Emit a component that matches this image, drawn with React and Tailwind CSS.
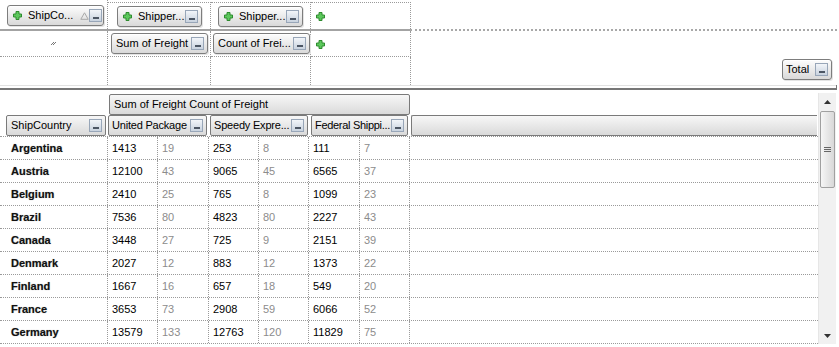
import React from "react";

const rows = [
  ["Argentina", 1413, 19, 253, 8, 111, 7],
  ["Austria", 12100, 43, 9065, 45, 6565, 37],
  ["Belgium", 2410, 25, 765, 8, 1099, 23],
  ["Brazil", 7536, 80, 4823, 80, 2227, 43],
  ["Canada", 3448, 27, 725, 9, 2151, 39],
  ["Denmark", 2027, 12, 883, 12, 1373, 22],
  ["Finland", 1667, 16, 657, 18, 549, 20],
  ["France", 3653, 73, 2908, 59, 6066, 52],
  ["Germany", 13579, 133, 12763, 120, 11829, 75],
];

const numWidths = ["w-[50px]", "w-[51px]", "w-[50px]", "w-[50px]", "w-[51px]", "w-[50px]"];

const Plus = () => (
  <svg width="9" height="9" viewBox="0 0 9 9" className="shrink-0">
    <path d="M3 .5h3V3h2.5v3H6v2.5H3V6H.5V3H3z" fill="#5cc85c" stroke="#2e8b2e" strokeWidth="1" />
  </svg>
);

const Hide = () => (
  <span className="shrink-0 w-[13px] h-[13px] border border-[#98a6b8] bg-gradient-to-b from-[#f2f5f9] to-[#c9d3df] flex items-end justify-center pb-[2px]">
    <span className="block w-[6px] h-[2px] bg-[#4c5664]" />
  </span>
);

const SortUp = () => (
  <svg width="9" height="8" viewBox="0 0 9 8" className="shrink-0">
    <path d="M4.5 .8 8.2 7.3H.8z" fill="none" stroke="#a8a8a8" strokeWidth="1" />
  </svg>
);

const Grip = () => (
  <svg width="7" height="5" viewBox="0 0 7 5">
    <path d="M1 4 4 1M3 4 6 1" stroke="#777" strokeWidth="1" />
  </svg>
);

// top bar field button
const Field = ({ children, className }) => (
  <div
    className={
      "flex items-center h-[21px] whitespace-nowrap border border-[#7d7d7d] rounded-[3px] bg-gradient-to-b from-[#fdfdfd] to-[#d9d9d9] shadow-[inset_0_1px_0_#fff,1px_1px_0_#e4e4e4] " +
      className
    }
  >
    {children}
  </div>
);

// grid column header
const Head = ({ children, className }) => (
  <div
    className={
      "flex items-center h-[21px] whitespace-nowrap border border-[#7a7a7a] rounded-[2px] bg-gradient-to-b from-[#f7f7f7] to-[#dadada] " +
      className
    }
  >
    {children}
  </div>
);

const dot = "border-dotted border-[#9a9a9a]";

export default function App() {
  return (
    <div className="w-[839px] h-[347px] bg-white overflow-hidden font-['Liberation_Sans',Arial,sans-serif] text-[11px] text-black leading-none">
      {/* PIVOT FIELDS AREA */}
      <div className="flex h-[29px]">
        <div className={`w-[108px] border-r ${dot} pt-[5px] pl-[7px]`}>
          <Field className="w-[97px] pl-[5px] pr-[3px]">
            <Plus />
            <span className="ml-[6px]">ShipCo...</span>
            <span className="ml-[7px]"><SortUp /></span>
            <span className="ml-auto"><Hide /></span>
          </Field>
        </div>
        <div className="flex mt-[2px]">
          <div className={`w-[103px] border-r border-t ${dot} pt-[3px] pl-[9px]`}>
            <Field className="w-[85px] pl-[5px] pr-[3px]">
              <Plus />
              <span className="ml-[6px]">Shipper...</span>
              <span className="ml-auto"><Hide /></span>
            </Field>
          </div>
          <div className={`w-[100px] border-r border-t ${dot} pt-[3px] pl-[7px]`}>
            <Field className="w-[85px] pl-[5px] pr-[3px]">
              <Plus />
              <span className="ml-[6px]">Shipper...</span>
              <span className="ml-auto"><Hide /></span>
            </Field>
          </div>
          <div className={`w-[100px] border-r border-t ${dot} pt-[9px] pl-[5px]`}>
            <Plus />
          </div>
        </div>
      </div>
      <div className="flex h-[2px]">
        <div className="w-[410px] bg-[#a3a3a3]" />
        <div className="w-[427px] border-t-2 border-dotted border-[#a8a8a8]" />
      </div>
      <div className="flex h-[26px]">
        <div className={`w-[108px] border-r border-b ${dot} flex items-center justify-center`}>
          <Grip />
        </div>
        <div className={`w-[103px] border-r border-b ${dot} pt-[2px] pl-[3px]`}>
          <Field className="w-[97px] h-[20px] pl-[4px] pr-[3px] rounded-[2px]">
            <span>Sum of Freight</span>
            <span className="ml-auto"><Hide /></span>
          </Field>
        </div>
        <div className={`w-[100px] border-r border-b ${dot} pt-[2px] pl-[2px]`}>
          <Field className="w-[97px] h-[20px] pl-[4px] pr-[3px] rounded-[2px]">
            <span>Count of Frei...</span>
            <span className="ml-auto"><Hide /></span>
          </Field>
        </div>
        <div className={`w-[100px] border-r border-b ${dot} pt-[9px] pl-[5px]`}>
          <Plus />
        </div>
      </div>
      <div className="flex h-[28px]">
        <div className={`w-[108px] border-r ${dot}`} />
        <div className={`w-[103px] border-r ${dot}`} />
        <div className={`w-[100px] border-r ${dot}`} />
        <div className={`w-[100px] border-r ${dot}`} />
        <div className="flex-1 flex justify-end pt-[2px] pr-[7px]">
          <Field className="w-[50px] h-[21px] pl-[3px] pr-[3px] rounded-[2px]">
            <span>Total</span>
            <span className="ml-auto"><Hide /></span>
          </Field>
        </div>
      </div>
      <div className="h-[1px] w-[836px] bg-[#e2e2e2]" />
      <div className="h-[2px]" />
      <div className="flex w-[837px]">
        <div className="flex-1 h-[2px] bg-[#777]" />
        <div className="w-[1px] h-[5px] -mt-[3px] bg-[#777]" />
      </div>

      {/* GRID */}
      <div className="flex">
        <div className="w-[818px]">
          <div className="h-[25px] pt-[4px] pl-[109px]">
            <Head className="w-[301px] h-[20px] pl-[4px]">
              <span>Sum of Freight Count of Freight</span>
            </Head>
          </div>
          <div className={`flex h-[22px] border-b ${dot}`}>
            <Head className="ml-[6px] w-[100px] pl-[4px] pr-[3px]">
              <span>ShipCountry</span>
              <span className="ml-auto"><Hide /></span>
            </Head>
            <Head className="ml-[2px] w-[99px] pl-[3px] pr-[3px]">
              <span className="tracking-[-0.2px]">United Package</span>
              <span className="ml-auto"><Hide /></span>
            </Head>
            <Head className="ml-[3px] w-[98px] pl-[3px] pr-[3px]">
              <span className="tracking-[-0.2px]">Speedy Expre...</span>
              <span className="ml-auto"><Hide /></span>
            </Head>
            <Head className="ml-[3px] w-[97px] pl-[3px] pr-[3px]">
              <span className="tracking-[-0.3px]">Federal Shippi...</span>
              <span className="ml-auto"><Hide /></span>
            </Head>
            <Head className="ml-[3px] w-[406px] border-r-0 rounded-r-none" />
          </div>
          {rows.map((r) => (
            <div key={r[0]} className={`flex h-[23px] border-b ${dot}`}>
              <div className={`w-[108px] border-r ${dot} pl-[11px] flex items-center font-bold text-[#111] [text-shadow:0_0_1px_#999]`}>
                {r[0]}
              </div>
              {r.slice(1).map((v, i) => (
                <div
                  key={i}
                  className={`${numWidths[i]} border-r ${dot} pl-[4px] flex items-center ${i % 2 ? "text-[#8c8c8c]" : "text-black"}`}
                >
                  {v}
                </div>
              ))}
              <div className="flex-1" />
            </div>
          ))}
        </div>

        {/* SCROLLBAR */}
        <div className="w-[18px] h-[251px] mt-[3px] bg-[#f1f1f1] border-l border-[#e6e6e6] flex flex-col items-center">
          <div className="h-[18px] flex items-center justify-center">
            <svg width="7" height="4" viewBox="0 0 7 4"><path d="M3.5 0 7 4H0z" fill="#333" /></svg>
          </div>
          <div className="w-[15px] h-[77px] border border-[#a0a0a0] rounded-[2px] bg-gradient-to-r from-[#f6f6f6] to-[#d8d8d8] flex flex-col items-center justify-center gap-[1px]">
            <span className="block w-[7px] h-[1px] bg-[#666]" />
            <span className="block w-[7px] h-[1px] bg-[#666]" />
            <span className="block w-[7px] h-[1px] bg-[#666]" />
          </div>
          <div className="flex-1" />
          <div className="h-[16px] flex items-center justify-center">
            <svg width="7" height="4" viewBox="0 0 7 4"><path d="M0 0h7L3.5 4z" fill="#333" /></svg>
          </div>
        </div>
      </div>
    </div>
  );
}
